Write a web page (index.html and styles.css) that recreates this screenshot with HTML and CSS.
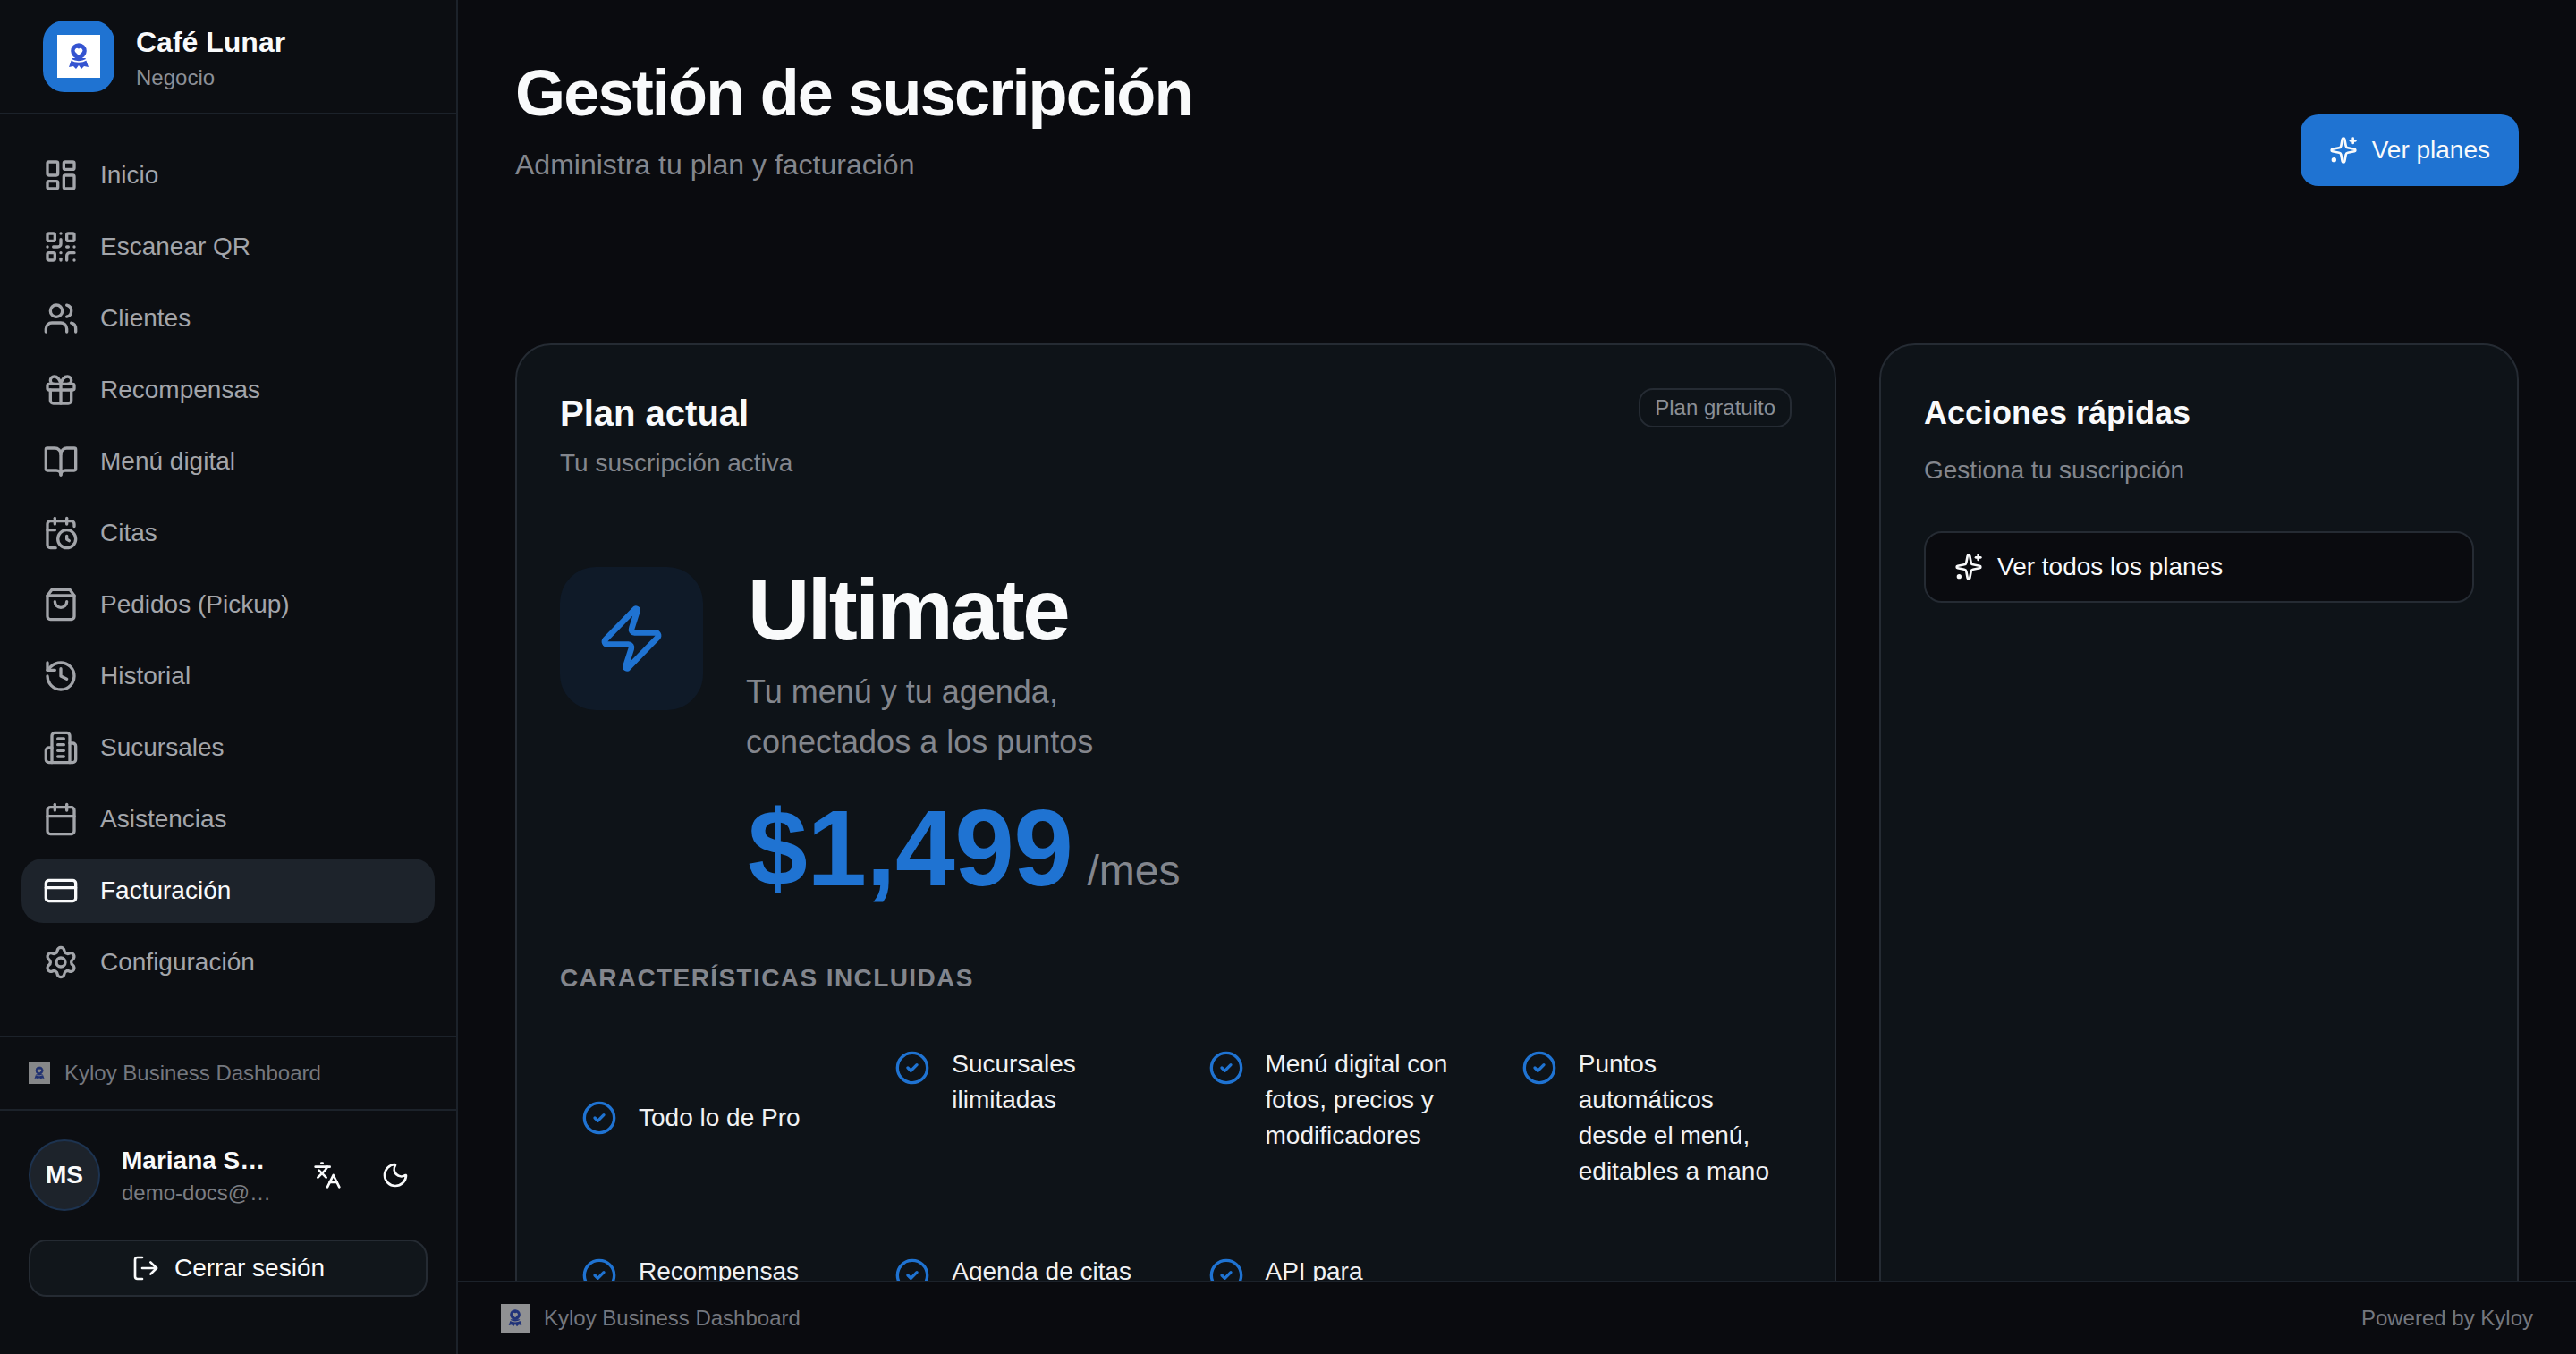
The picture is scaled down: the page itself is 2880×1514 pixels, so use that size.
FILE: index.html
```html
<!DOCTYPE html>
<html lang="es">
<head>
<meta charset="utf-8">
<title>Gestión de suscripción</title>
<link rel="stylesheet" href="styles.css">
</head>
<body>
<svg class="defs" width="0" height="0" aria-hidden="true">
  <symbol id="logo" viewBox="0 0 48 48">
    <path class="logo-fill" d="M16.5 26 13 36l5-1 3 3 3-4 3 4 3-3 5 1-3.500-10z"/>
    <circle class="logo-ring" cx="24" cy="18" r="7.800"/>
    <path class="logo-heart" d="M24 23l-4-4.100a2.600 2.600 0 0 1 3.600-3.600l.4.400.4-.4a2.600 2.600 0 0 1 3.600 3.600z"/>
    <path class="logo-line" d="M15 27.500q9 5 18 0"/>
  </symbol>
  <symbol id="sparkles" viewBox="0 0 24 24">
    <path d="M11.017 2.814a1 1 0 0 1 1.966 0l1.051 5.558a2 2 0 0 0 1.594 1.594l5.558 1.051a1 1 0 0 1 0 1.966l-5.558 1.051a2 2 0 0 0-1.594 1.594l-1.051 5.558a1 1 0 0 1-1.966 0l-1.051-5.558a2 2 0 0 0-1.594-1.594l-5.558-1.051a1 1 0 0 1 0-1.966l5.558-1.051a2 2 0 0 0 1.594-1.594z"/><path d="M20 2v4"/><path d="M22 4h-4"/><circle cx="4" cy="20" r="1"/>
  </symbol>
  <symbol id="check" viewBox="0 0 24 24">
    <circle cx="12" cy="12" r="10"/><path d="m9 12 2 2 4-4"/>
  </symbol>
</svg>
<div class="app">
  <aside class="sidebar">
    <header class="brand">
      <div class="brand-logo"><svg class="logo-img"><use href="#logo"/></svg></div>
      <div class="brand-text">
        <div class="brand-name">Café Lunar</div>
        <div class="brand-role">Negocio</div>
      </div>
    </header>
    <nav class="nav">
      <a class="nav-item"><svg class="ico" viewBox="0 0 24 24"><rect x="3" y="3" width="7" height="9" rx="1"/><rect x="14" y="3" width="7" height="5" rx="1"/><rect x="14" y="12" width="7" height="9" rx="1"/><rect x="3" y="16" width="7" height="5" rx="1"/></svg>Inicio</a>
      <a class="nav-item"><svg class="ico" viewBox="0 0 24 24"><rect x="3" y="3" width="5" height="5" rx="1"/><rect x="16" y="3" width="5" height="5" rx="1"/><rect x="3" y="16" width="5" height="5" rx="1"/><path d="M21 16h-3a2 2 0 0 0-2 2v3"/><path d="M21 21v.01"/><path d="M12 7v3a2 2 0 0 1-2 2H7"/><path d="M3 12h.01"/><path d="M12 3h.01"/><path d="M12 16v.01"/><path d="M16 12h1"/><path d="M21 12v.01"/><path d="M12 21v-1"/></svg>Escanear QR</a>
      <a class="nav-item"><svg class="ico" viewBox="0 0 24 24"><path d="M16 21v-2a4 4 0 0 0-4-4H6a4 4 0 0 0-4 4v2"/><circle cx="9" cy="7" r="4"/><path d="M22 21v-2a4 4 0 0 0-3-3.87"/><path d="M16 3.13a4 4 0 0 1 0 7.75"/></svg>Clientes</a>
      <a class="nav-item"><svg class="ico" viewBox="0 0 24 24"><rect x="3" y="8" width="18" height="4" rx="1"/><path d="M12 8v13"/><path d="M19 12v7a2 2 0 0 1-2 2H7a2 2 0 0 1-2-2v-7"/><path d="M7.5 8a2.5 2.5 0 0 1 0-5A4.8 8 0 0 1 12 8a4.8 8 0 0 1 4.5-5 2.5 2.5 0 0 1 0 5"/></svg>Recompensas</a>
      <a class="nav-item"><svg class="ico" viewBox="0 0 24 24"><path d="M12 7v14"/><path d="M3 18a1 1 0 0 1-1-1V4a1 1 0 0 1 1-1h5a4 4 0 0 1 4 4 4 4 0 0 1 4-4h5a1 1 0 0 1 1 1v13a1 1 0 0 1-1 1h-6a3 3 0 0 0-3 3 3 3 0 0 0-3-3z"/></svg>Menú digital</a>
      <a class="nav-item"><svg class="ico" viewBox="0 0 24 24"><path d="M16 14v2.2l1.6 1"/><path d="M16 2v4"/><path d="M21 7.5V6a2 2 0 0 0-2-2H5a2 2 0 0 0-2 2v14a2 2 0 0 0 2 2h3.5"/><path d="M3 10h5"/><path d="M8 2v4"/><circle cx="16" cy="16" r="6"/></svg>Citas</a>
      <a class="nav-item"><svg class="ico" viewBox="0 0 24 24"><path d="M6 2 3 6v14a2 2 0 0 0 2 2h14a2 2 0 0 0 2-2V6l-3-4Z"/><path d="M3 6h18"/><path d="M16 10a4 4 0 0 1-8 0"/></svg>Pedidos (Pickup)</a>
      <a class="nav-item"><svg class="ico" viewBox="0 0 24 24"><path d="M3 12a9 9 0 1 0 9-9 9.75 9.75 0 0 0-6.74 2.74L3 8"/><path d="M3 3v5h5"/><path d="M12 7v5l4 2"/></svg>Historial</a>
      <a class="nav-item"><svg class="ico" viewBox="0 0 24 24"><path d="M6 22V4a2 2 0 0 1 2-2h8a2 2 0 0 1 2 2v18Z"/><path d="M6 12H4a2 2 0 0 0-2 2v6a2 2 0 0 0 2 2h2"/><path d="M18 9h2a2 2 0 0 1 2 2v9a2 2 0 0 1-2 2h-2"/><path d="M10 6h4"/><path d="M10 10h4"/><path d="M10 14h4"/><path d="M10 18h4"/></svg>Sucursales</a>
      <a class="nav-item"><svg class="ico" viewBox="0 0 24 24"><path d="M8 2v4"/><path d="M16 2v4"/><rect x="3" y="4" width="18" height="18" rx="2"/><path d="M3 10h18"/></svg>Asistencias</a>
      <a class="nav-item is-active"><svg class="ico" viewBox="0 0 24 24"><rect x="2" y="5" width="20" height="14" rx="2"/><path d="M2 10h20"/></svg>Facturación</a>
      <a class="nav-item"><svg class="ico" viewBox="0 0 24 24"><path d="M9.671 4.136a2.34 2.34 0 0 1 4.659 0 2.34 2.34 0 0 0 3.319 1.915 2.34 2.34 0 0 1 2.33 4.033 2.34 2.34 0 0 0 0 3.831 2.34 2.34 0 0 1-2.33 4.033 2.34 2.34 0 0 0-3.319 1.915 2.34 2.34 0 0 1-4.659 0 2.34 2.34 0 0 0-3.32-1.915 2.34 2.34 0 0 1-2.33-4.033 2.34 2.34 0 0 0 0-3.831A2.34 2.34 0 0 1 6.35 6.051a2.34 2.34 0 0 0 3.319-1.915"/><circle cx="12" cy="12" r="3"/></svg>Configuración</a>
    </nav>
    <div class="side-strip">
      <svg class="logo-small"><use href="#logo"/></svg>
      <span>Kyloy Business Dashboard</span>
    </div>
    <div class="profile">
      <div class="profile-row">
        <div class="avatar">MS</div>
        <div class="profile-text">
          <div class="profile-name">Mariana Sánchez</div>
          <div class="profile-mail">demo-docs@kyloy.com</div>
        </div>
        <svg class="tool-ico" viewBox="0 0 24 24"><path d="m5 8 6 6"/><path d="m4 14 6-6 2-3"/><path d="M2 5h12"/><path d="M7 2h1"/><path d="m22 22-5-10-5 10"/><path d="M14 18h6"/></svg>
        <svg class="tool-ico" viewBox="0 0 24 24"><path d="M20.985 12.486a9 9 0 1 1-9.473-9.472c.405-.022.617.46.402.803a6 6 0 0 0 8.268 8.268c.344-.215.825-.004.803.401"/></svg>
      </div>
      <button class="logout"><svg class="btn-ico" viewBox="0 0 24 24"><path d="m16 17 5-5-5-5"/><path d="M21 12H9"/><path d="M9 21H5a2 2 0 0 1-2-2V5a2 2 0 0 1 2-2h4"/></svg>Cerrar sesión</button>
    </div>
  </aside>
  <main class="main">
    <div class="content">
      <div class="page-head">
        <div class="page-heading">
          <h1 class="page-title">Gestión de suscripción</h1>
          <p class="page-sub">Administra tu plan y facturación</p>
        </div>
        <button class="btn-primary"><svg class="btn-ico"><use href="#sparkles"/></svg>Ver planes</button>
      </div>
      <div class="cards">
        <section class="card">
          <div class="card-head">
            <div>
              <h2 class="card-title">Plan actual</h2>
              <p class="card-sub">Tu suscripción activa</p>
            </div>
            <span class="badge">Plan gratuito</span>
          </div>
          <div class="plan">
            <div class="plan-icon"><svg viewBox="0 0 24 24"><path d="M4 14a1 1 0 0 1-.78-1.63l9.9-10.2a.5.5 0 0 1 .86.46l-1.92 6.02A1 1 0 0 0 13 10h7a1 1 0 0 1 .78 1.63l-9.9 10.2a.5.5 0 0 1-.86-.46l1.92-6.02A1 1 0 0 0 11 14z"/></svg></div>
            <div>
              <div class="plan-name">Ultimate</div>
              <p class="plan-tag">Tu menú y tu agenda,<br>conectados a los puntos</p>
              <div class="plan-price"><span class="amount">$1,499</span><span class="per">/mes</span></div>
            </div>
          </div>
          <h3 class="feat-head">Características incluidas</h3>
          <ul class="feats">
            <li class="feat feat-single"><svg class="feat-ico"><use href="#check"/></svg><span>Todo lo de Pro</span></li>
            <li class="feat"><svg class="feat-ico"><use href="#check"/></svg><span>Sucursales ilimitadas</span></li>
            <li class="feat"><svg class="feat-ico"><use href="#check"/></svg><span>Menú digital con fotos, precios y modificadores</span></li>
            <li class="feat"><svg class="feat-ico"><use href="#check"/></svg><span>Puntos automáticos desde el menú, editables a mano</span></li>
            <li class="feat"><svg class="feat-ico"><use href="#check"/></svg><span>Recompensas</span></li>
            <li class="feat"><svg class="feat-ico"><use href="#check"/></svg><span>Agenda de citas</span></li>
            <li class="feat"><svg class="feat-ico"><use href="#check"/></svg><span>API para integraciones</span></li>
          </ul>
        </section>
        <section class="card">
          <h2 class="card-title card-title-sm">Acciones rápidas</h2>
          <p class="card-sub card-sub-wide">Gestiona tu suscripción</p>
          <button class="btn-outline"><svg class="btn-ico"><use href="#sparkles"/></svg>Ver todos los planes</button>
        </section>
      </div>
    </div>
    <footer class="footer">
      <div class="footer-left"><svg class="logo-foot"><use href="#logo"/></svg><span>Kyloy Business Dashboard</span></div>
      <span>Powered by Kyloy</span>
    </footer>
  </main>
</div>
</body>
</html>
```
FILE: styles.css
```css
* { box-sizing: border-box; }
html, body { margin: 0; height: 100%; }
body {
  background: #0a0b0f;
  color: #f9fafb;
  font-family: "Liberation Sans", Arial, sans-serif;
  overflow: hidden;
}
.defs { position: absolute; }
svg { fill: none; stroke: currentColor; stroke-width: 2; stroke-linecap: round; stroke-linejoin: round; flex: none; }
h1, h2, h3, p, ul { margin: 0; padding: 0; }
ul { list-style: none; }
button { font: inherit; cursor: pointer; }

.logo-fill { fill: #3554d1; stroke: none; }
.logo-ring { fill: #3554d1; stroke: #3554d1; stroke-width: 2; }
.logo-heart { fill: #fff; stroke: none; }
.logo-line { stroke: #fff; stroke-width: 1.6; fill: none; }

.app { display: flex; height: 1514px; }

.sidebar {
  width: 512px;
  flex: none;
  display: flex;
  flex-direction: column;
  background: #0c0e12;
  border-right: 2px solid #1c222a;
}
.brand {
  height: 128px;
  flex: none;
  display: flex;
  align-items: center;
  gap: 24px;
  padding: 0 46px 0 48px;
  border-bottom: 2px solid #1c222a;
}
.brand-logo {
  width: 80px;
  height: 80px;
  border-radius: 24px;
  background: #1f73d2;
  display: flex;
  align-items: center;
  justify-content: center;
}
.logo-img { width: 48px; height: 48px; background: #fff; stroke: none; }
.brand-name { font-size: 32px; font-weight: 700; line-height: 48px; color: #f9fafb; }
.brand-role { font-size: 24px; line-height: 32px; color: #8b8f96; }

.nav { flex: 1; display: flex; flex-direction: column; gap: 8px; padding: 32px 24px; }
.nav-item {
  height: 72px;
  display: flex;
  align-items: center;
  gap: 24px;
  padding: 0 24px;
  border-radius: 24px;
  font-size: 28px;
  color: #a3a5aa;
}
.nav-item.is-active { background: #1d232b; color: #f9fafb; }
.ico { width: 40px; height: 40px; }

.side-strip {
  height: 84px;
  flex: none;
  display: flex;
  align-items: center;
  gap: 16px;
  padding: 0 32px;
  border-top: 2px solid #1c222a;
  border-bottom: 2px solid #1c222a;
  font-size: 24px;
  color: #74777e;
}
.logo-small { width: 24px; height: 24px; background: #fff; stroke: none; opacity: .5; }

.profile { padding: 32px 32px 64px; display: flex; flex-direction: column; gap: 32px; }
.profile-row { display: flex; align-items: center; height: 80px; }
.avatar {
  width: 80px;
  height: 80px;
  flex: none;
  border-radius: 50%;
  background: #1d232b;
  border: 2px solid #1d3350;
  display: flex;
  align-items: center;
  justify-content: center;
  font-size: 28px;
  font-weight: 700;
}
.profile-text { width: 168px; flex: none; margin: 0 46px 0 24px; }
.profile-name, .profile-mail { white-space: nowrap; overflow: hidden; text-overflow: ellipsis; }
.profile-name { font-size: 28px; line-height: 40px; font-weight: 700; }
.profile-mail { font-size: 24px; line-height: 32px; color: #7a7d83; }
.tool-ico { width: 32px; height: 32px; margin-right: 44px; color: #f9fafb; }
.tool-ico:last-child { margin-right: 0; }
.logout {
  height: 64px;
  display: flex;
  align-items: center;
  justify-content: center;
  gap: 16px;
  border-radius: 20px;
  background: #11161b;
  border: 2px solid #252b33;
  color: #f9fafb;
  font-size: 28px;
}
.btn-ico { width: 32px; height: 32px; }

.main { flex: 1; min-width: 0; display: flex; flex-direction: column; }
.content { flex: 1; min-height: 0; overflow: hidden; padding: 64px 64px 0; }
.page-head { display: flex; justify-content: space-between; align-items: flex-end; height: 144px; margin-bottom: 176px; }
.page-heading { align-self: flex-start; }
.page-title { font-size: 72px; line-height: 80px; font-weight: 700; letter-spacing: -1.8px; }
.page-sub { margin-top: 20px; font-size: 32px; line-height: 40px; color: #83868d; }
.btn-primary {
  height: 80px;
  display: flex;
  align-items: center;
  gap: 16px;
  padding: 0 32px;
  border: 0;
  border-radius: 20px;
  background: #1f73d2;
  color: #f9fafb;
  font-size: 28px;
}

.cards { display: grid; grid-template-columns: 1477px 1fr; gap: 48px; align-items: stretch; }
.card {
  background: #0e1318;
  border: 2px solid #252b33;
  border-radius: 40px;
  padding: 48px;
}
.card-head { display: flex; justify-content: space-between; align-items: flex-start; }
.card-title { font-size: 40px; line-height: 56px; font-weight: 700; }
.card-title-sm { font-size: 36px; }
.card-sub { margin-top: 8px; font-size: 28px; line-height: 40px; color: #83868d; }
.card-sub-wide { margin-top: 16px; }
.badge {
  height: 44px;
  display: flex;
  align-items: center;
  padding: 0 16px;
  border: 2px solid #252b33;
  border-radius: 16px;
  font-size: 24px;
  color: #8b8f96;
}
.plan { display: flex; gap: 48px; margin-top: 96px; }
.plan-icon {
  width: 160px;
  height: 160px;
  flex: none;
  border-radius: 40px;
  background: #0f1a28;
  color: #1f73d2;
  display: flex;
  align-items: center;
  justify-content: center;
}
.plan-icon svg { width: 80px; height: 80px; }
.plan-name { font-size: 96px; line-height: 96px; font-weight: 700; letter-spacing: -2.6px; padding-left: 2px; }
.plan-tag { margin-top: 16px; font-size: 36px; line-height: 56px; color: #83868d; }
.plan-price { margin-top: 30px; display: flex; align-items: baseline; gap: 16px; padding-left: 2px; }
.amount { font-size: 120px; line-height: 120px; font-weight: 700; letter-spacing: -.6px; color: #1f73d2; }
.per { font-size: 48px; color: #83868d; }
.feat-head {
  margin-top: 66px;
  font-size: 28px;
  line-height: 40px;
  font-weight: 700;
  letter-spacing: 1.4px;
  text-transform: uppercase;
  color: #83868d;
}
.feats { margin-top: 32px; display: grid; grid-template-columns: repeat(4, 1fr); gap: 24px; }
.feat { display: flex; align-items: flex-start; gap: 24px; padding: 24px; font-size: 28px; line-height: 40px; color: #f0f1f3; }
.feat-single { align-self: center; align-items: center; }
.feat-ico { width: 40px; height: 40px; margin-top: 4px; color: #1f73d2; }
.feat-single .feat-ico { margin-top: 0; }

.btn-outline {
  width: 100%;
  height: 80px;
  margin-top: 48px;
  display: flex;
  align-items: center;
  gap: 16px;
  padding: 0 32px;
  border: 2px solid #252b33;
  border-radius: 20px;
  background: #0a0b0f;
  color: #f9fafb;
  font-size: 28px;
}

.footer {
  height: 82px;
  flex: none;
  display: flex;
  align-items: center;
  justify-content: space-between;
  padding: 0 48px;
  border-top: 2px solid #1c222a;
  background: #0a0b0f;
  font-size: 24px;
  color: #74777e;
}
.footer-left { display: flex; align-items: center; gap: 16px; }
.logo-foot { width: 32px; height: 32px; background: #fff; stroke: none; opacity: .55; }
```
